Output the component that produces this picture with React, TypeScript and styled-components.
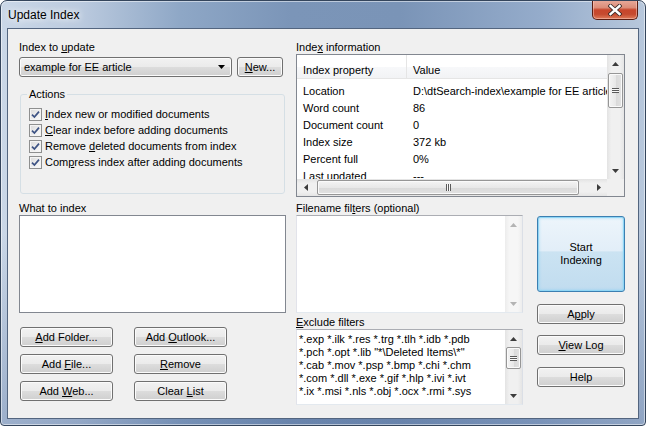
import React from 'react';
import styled, { createGlobalStyle } from 'styled-components';

const GlobalStyle = createGlobalStyle`
  html, body {
    margin: 0;
    padding: 0;
    background: #ffffff;
  }
  body {
    font-family: 'Liberation Sans', Arial, sans-serif;
    font-size: 11px;
    color: #000;
  }
`;

type Dir = 'up' | 'down' | 'left' | 'right';

const Tri: React.FC<{ dir: Dir; color?: string }> = ({ dir, color = '#3c3c3c' }) => {
  const vertical = dir === 'up' || dir === 'down';
  const points = {
    up: '0,4 3.5,0 7,4',
    down: '0,0 7,0 3.5,4',
    left: '4,0 4,7 0,3.5',
    right: '0,0 0,7 4,3.5',
  }[dir];
  return (
    <svg width={vertical ? 7 : 4} height={vertical ? 4 : 7} viewBox={vertical ? '0 0 7 4' : '0 0 4 7'}>
      <polygon points={points} fill={color} />
    </svg>
  );
};

const Window = styled.div`
  width: 646px;
  height: 426px;
  box-sizing: border-box;
  border: 1px solid #34455c;
  border-radius: 7px 7px 4px 4px;
  padding: 0 6px 6px;
  display: flex;
  flex-direction: column;
  background:
    linear-gradient(to bottom, rgba(255, 255, 255, 0) 0%, rgba(255, 255, 255, 0) 55%, rgba(70, 100, 150, 0.35) 100%),
    linear-gradient(to right, #cad7e7 0%, #bccbdf 12%, #8ea7c6 28%, #7b95b8 45%, #7a94b7 62%, #95accb 84%, #b8c8dc 100%);
  box-shadow: inset 0 0 0 1px rgba(255, 255, 255, 0.5);
  overflow: hidden;
`;

const TitleBar = styled.div`
  height: 27px;
  flex: none;
  display: flex;
  justify-content: space-between;
  align-items: flex-start;
  padding-left: 1px;
`;

const Title = styled.div`
  margin-top: 6px;
  font-size: 12px;
  line-height: 16px;
  color: #000;
  text-shadow: 0 0 6px rgba(255, 255, 255, 0.95), 0 0 10px rgba(255, 255, 255, 0.8);
`;

const CloseButton = styled.div`
  width: 46px;
  height: 20px;
  margin: -1px 1px 0 0;
  box-sizing: border-box;
  border: 1px solid #5a1d12;
  border-top: none;
  border-radius: 0 0 5px 5px;
  background: linear-gradient(to bottom, #e9ab9c 0%, #dc8d79 40%, #c8462c 52%, #c54a2f 75%, #df7b5a 100%);
  box-shadow: inset 0 0 0 1px rgba(255, 220, 210, 0.45);
  display: flex;
  align-items: center;
  justify-content: center;
`;

const Client = styled.div`
  flex: 1;
  box-sizing: border-box;
  border: 1px solid #53657f;
  background: #f0f0f0;
  padding: 11px 13px 0 11px;
  display: flex;
  gap: 10px;
`;

const LeftColumn = styled.div`
  width: 267px;
  display: flex;
  flex-direction: column;
`;

const RightColumn = styled.div`
  width: 329px;
  display: flex;
  flex-direction: column;
`;

const FieldLabel = styled.div<{ $mt?: number }>`
  height: 14px;
  line-height: 14px;
  margin-top: ${(p) => p.$mt ?? 0}px;
  white-space: nowrap;
`;

const Mn = styled.span`
  text-decoration: underline;
  text-underline-offset: 1px;
`;

const PushButton = styled.button<{ $w?: number; $h?: number; $mt?: number; $primary?: boolean }>`
  width: ${(p) => (p.$w ? `${p.$w}px` : '100%')};
  height: ${(p) => p.$h ?? 20}px;
  margin: ${(p) => p.$mt ?? 0}px 0 0;
  padding: 0;
  box-sizing: border-box;
  font: inherit;
  font-size: 11px;
  line-height: 13px;
  color: #000;
  border: 1px solid ${(p) => (p.$primary ? '#3c7fb1' : '#707070')};
  border-radius: 3px;
  background: ${(p) =>
    p.$primary
      ? 'linear-gradient(to bottom, #edf5fb 0%, #e2eef8 46%, #cbe3f2 47%, #c1dcef 100%)'
      : 'linear-gradient(to bottom, #f2f2f2 0%, #ebebeb 48%, #dddddd 50%, #cfcfcf 100%)'};
  box-shadow: ${(p) =>
    p.$primary ? 'inset 0 0 0 1px #8fd6f5, inset 0 0 3px 1px rgba(120, 205, 245, 0.6)' : 'inset 0 0 0 1px #fbfbfb'};
  display: flex;
  align-items: center;
  justify-content: center;
  text-align: center;
  flex: none;
`;

const ComboRow = styled.div`
  margin-top: 3px;
  display: flex;
  align-items: center;
  gap: 5px;
`;

const Combo = styled.div`
  width: 213px;
  height: 20px;
  box-sizing: border-box;
  border: 1px solid #707070;
  border-radius: 3px;
  background: linear-gradient(to bottom, #f2f2f2 0%, #ebebeb 48%, #dddddd 50%, #cfcfcf 100%);
  box-shadow: inset 0 0 0 1px #fbfbfb;
  padding: 0 6px 0 4px;
  display: flex;
  align-items: center;
  justify-content: space-between;
`;

const GroupBox = styled.fieldset`
  margin: 11px 1px 0;
  height: 106px;
  box-sizing: border-box;
  border: 1px solid #d5dfe5;
  border-radius: 3px;
  padding: 0 6px;
  min-width: 0;
`;

const GroupLegend = styled.legend`
  padding: 0 2px;
  line-height: 13px;
`;

const CheckList = styled.div`
  margin: 5px 0 0 2px;
  display: flex;
  flex-direction: column;
`;

const CheckRow = styled.div`
  height: 16px;
  display: flex;
  align-items: center;
  gap: 3px;
  white-space: nowrap;
`;

const CheckBox = styled.span`
  width: 13px;
  height: 13px;
  box-sizing: border-box;
  flex: none;
  border: 1px solid #8e8f8f;
  background: linear-gradient(135deg, #d9d9d9 0%, #eeeeee 55%, #fbfbfb 100%);
  box-shadow: inset 0 0 0 1px #f4f4f4;
  display: flex;
  align-items: center;
  justify-content: center;
`;

const ListBox = styled.div<{ $h: number; $light?: boolean }>`
  height: ${(p) => p.$h}px;
  box-sizing: border-box;
  border: 1px solid;
  border-color: ${(p) => (p.$light ? '#abadb3 #dbdfe6 #e3e9ef #e2e3ea' : '#828790')};
  background: #fff;
  display: flex;
  overflow: hidden;
`;

const ButtonGrid = styled.div`
  margin: 14px 0 0 1px;
  display: grid;
  grid-template-columns: 93px 93px;
  column-gap: 21px;
  row-gap: 7px;
`;

const ListView = styled.div`
  height: 143px;
  box-sizing: border-box;
  border: 1px solid #828790;
  background: #fff;
  display: grid;
  grid-template-columns: 1fr 17px;
  grid-template-rows: 1fr 17px;
  overflow: hidden;
`;

const ListContent = styled.div`
  overflow: hidden;
  min-width: 0;
`;

const ListHeader = styled.div`
  height: 24px;
  box-sizing: border-box;
  border-bottom: 1px solid #e5e5e5;
  background: linear-gradient(to bottom, #ffffff 0%, #ffffff 50%, #f7f8fa 51%, #f2f3f5 100%);
  display: grid;
  grid-template-columns: 110px 1fr;
`;

const HeaderCell = styled.div<{ $divider?: boolean }>`
  padding: 8px 0 0 6px;
  line-height: 14px;
  border-right: ${(p) => (p.$divider ? '1px solid #e5e5e5' : 'none')};
  white-space: nowrap;
`;

const ListRows = styled.div`
  padding-top: 4px;
  display: grid;
  grid-template-columns: 110px 200px;
  grid-auto-rows: 17px;
`;

const Cell = styled.div`
  padding-left: 6px;
  line-height: 17px;
  white-space: nowrap;
  overflow: hidden;
`;

const VScroll = styled.div<{ $disabled?: boolean }>`
  width: 17px;
  flex: none;
  display: flex;
  flex-direction: column;
  background: ${(p) =>
    p.$disabled
      ? 'linear-gradient(to right, #ececec 0%, #f6f6f6 25%, #f6f6f6 75%, #ededed 100%)'
      : 'linear-gradient(to right, #e3e3e3 0%, #f0f0f0 25%, #f0f0f0 75%, #e5e5e5 100%)'};
`;

const HScroll = styled.div`
  height: 17px;
  display: flex;
  background: linear-gradient(to bottom, #e3e3e3 0%, #f0f0f0 25%, #f0f0f0 75%, #e5e5e5 100%);
`;

const ScrollCorner = styled.div`
  background: #f0f0f0;
`;

const ScrollBtn = styled.div`
  width: 17px;
  height: 17px;
  flex: none;
  display: flex;
  align-items: center;
  justify-content: center;
`;

const Track = styled.div<{ $horizontal?: boolean }>`
  flex: 1;
  min-width: 0;
  min-height: 0;
  display: flex;
  flex-direction: ${(p) => (p.$horizontal ? 'row' : 'column')};
`;

const ThumbV = styled.div<{ $offset: number; $size: number }>`
  margin: ${(p) => p.$offset}px 1px 0;
  height: ${(p) => p.$size}px;
  box-sizing: border-box;
  border: 1px solid #969696;
  border-radius: 2px;
  background: linear-gradient(to right, #f4f4f4 0%, #e8e8e8 50%, #d9d9d9 51%, #e2e2e2 100%);
  box-shadow: inset 0 0 0 1px #fafafa;
  display: flex;
  align-items: center;
  justify-content: center;
`;

const ThumbH = styled.div<{ $offset: number; $size: number }>`
  margin: 1px 0 1px ${(p) => p.$offset}px;
  width: ${(p) => p.$size}px;
  box-sizing: border-box;
  border: 1px solid #969696;
  border-radius: 2px;
  background: linear-gradient(to bottom, #f4f4f4 0%, #e8e8e8 50%, #d9d9d9 51%, #e2e2e2 100%);
  box-shadow: inset 0 0 0 1px #fafafa;
  display: flex;
  align-items: center;
  justify-content: center;
`;

const GripV = styled.div`
  width: 7px;
  height: 5px;
  background: repeating-linear-gradient(to bottom, #5a5a5a 0 1px, #f8f8f8 1px 2px);
`;

const GripH = styled.div`
  width: 5px;
  height: 7px;
  background: repeating-linear-gradient(to right, #5a5a5a 0 1px, #f8f8f8 1px 2px);
`;

const BottomRow = styled.div`
  margin-top: 4px;
  display: flex;
  gap: 14px;
`;

const FiltersColumn = styled.div`
  width: 227px;
  display: flex;
  flex-direction: column;
`;

const ActionColumn = styled.div`
  width: 88px;
  display: flex;
  flex-direction: column;
`;

const TextArea = styled.div`
  flex: 1;
  min-width: 0;
  padding: 3px 0 0 2px;
  line-height: 13px;
  white-space: nowrap;
  overflow: hidden;
`;

const VScrollBar: React.FC<{ disabled?: boolean; thumb?: { offset: number; size: number } }> = ({
  disabled,
  thumb,
}) => {
  const arrow = disabled ? '#b4b4b4' : '#3c3c3c';
  return (
    <VScroll $disabled={disabled}>
      <ScrollBtn>
        <Tri dir="up" color={arrow} />
      </ScrollBtn>
      <Track>
        {thumb && (
          <ThumbV $offset={thumb.offset} $size={thumb.size}>
            <GripV />
          </ThumbV>
        )}
      </Track>
      <ScrollBtn>
        <Tri dir="down" color={arrow} />
      </ScrollBtn>
    </VScroll>
  );
};

const indexInfo: [string, string][] = [
  ['Location', 'D:\\dtSearch-index\\example for EE article'],
  ['Word count', '86'],
  ['Document count', '0'],
  ['Index size', '372 kb'],
  ['Percent full', '0%'],
  ['Last updated', '---'],
];

const excludeFilters = [
  '*.exp *.ilk *.res *.trg *.tlh *.idb *.pdb',
  '*.pch *.opt *.lib "*\\Deleted Items\\*"',
  '*.cab *.mov *.psp *.bmp *.chi *.chm',
  '*.com *.dll *.exe *.gif *.hlp *.ivi *.ivt',
  '*.ix *.msi *.nls *.obj *.ocx *.rmi *.sys',
];

const Check: React.FC<{ children: React.ReactNode }> = ({ children }) => (
  <CheckRow>
    <CheckBox>
      <svg width="9" height="9" viewBox="0 0 9 9">
        <path d="M1 4.6 L3.4 7 L8 1.6" fill="none" stroke="#3d5384" strokeWidth="1.7" />
      </svg>
    </CheckBox>
    <span>{children}</span>
  </CheckRow>
);

const App: React.FC = () => {
  return (
    <>
      <GlobalStyle />
      <Window>
        <TitleBar>
          <Title>Update Index</Title>
          <CloseButton>
            <svg width="14" height="12" viewBox="0 0 14 12">
              <path d="M2.5 2 L11.5 10 M11.5 2 L2.5 10" stroke="#3a2a28" strokeWidth="4.2" strokeLinecap="square" />
              <path d="M2.5 2 L11.5 10 M11.5 2 L2.5 10" stroke="#ffffff" strokeWidth="2.4" strokeLinecap="square" />
            </svg>
          </CloseButton>
        </TitleBar>
        <Client>
          <LeftColumn>
            <FieldLabel>
              Index to <Mn>u</Mn>pdate
            </FieldLabel>
            <ComboRow>
              <Combo>
                <span>example for EE article</span>
                <Tri dir="down" color="#000" />
              </Combo>
              <PushButton $w={46}>
                <span>
                  <Mn>N</Mn>ew...
                </span>
              </PushButton>
            </ComboRow>
            <GroupBox>
              <GroupLegend>Actions</GroupLegend>
              <CheckList>
                <Check>
                  <Mn>I</Mn>ndex new or modified documents
                </Check>
                <Check>
                  <Mn>C</Mn>lear index before adding documents
                </Check>
                <Check>
                  Remove <Mn>d</Mn>eleted documents from index
                </Check>
                <Check>
                  Com<Mn>p</Mn>ress index after adding documents
                </Check>
              </CheckList>
            </GroupBox>
            <FieldLabel $mt={7}>What to index</FieldLabel>
            <ListBox $h={98} />
            <ButtonGrid>
              <PushButton>
                <span>
                  <Mn>A</Mn>dd Folder...
                </span>
              </PushButton>
              <PushButton>
                <span>
                  Add <Mn>O</Mn>utlook...
                </span>
              </PushButton>
              <PushButton>
                <span>
                  Add <Mn>F</Mn>ile...
                </span>
              </PushButton>
              <PushButton>
                <span>
                  <Mn>R</Mn>emove
                </span>
              </PushButton>
              <PushButton>
                <span>
                  Add <Mn>W</Mn>eb...
                </span>
              </PushButton>
              <PushButton>
                <span>
                  Clear <Mn>L</Mn>ist
                </span>
              </PushButton>
            </ButtonGrid>
          </LeftColumn>

          <RightColumn>
            <FieldLabel>
              Inde<Mn>x</Mn> information
            </FieldLabel>
            <ListView>
              <ListContent>
                <ListHeader>
                  <HeaderCell $divider>Index property</HeaderCell>
                  <HeaderCell>Value</HeaderCell>
                </ListHeader>
                <ListRows>
                  {indexInfo.map(([k, v]) => (
                    <React.Fragment key={k}>
                      <Cell>{k}</Cell>
                      <Cell>{v}</Cell>
                    </React.Fragment>
                  ))}
                </ListRows>
              </ListContent>
              <VScrollBar thumb={{ offset: 1, size: 35 }} />
              <HScroll>
                <ScrollBtn>
                  <Tri dir="left" />
                </ScrollBtn>
                <Track $horizontal>
                  <ThumbH $offset={3} $size={262}>
                    <GripH />
                  </ThumbH>
                </Track>
                <ScrollBtn>
                  <Tri dir="right" />
                </ScrollBtn>
              </HScroll>
              <ScrollCorner />
            </ListView>

            <BottomRow>
              <FiltersColumn>
                <FieldLabel>
                  Filename fil<Mn>t</Mn>ers (optional)
                </FieldLabel>
                <ListBox $h={98} $light>
                  <TextArea />
                  <VScrollBar disabled />
                </ListBox>
                <FieldLabel $mt={2}>
                  <Mn>E</Mn>xclude filters
                </FieldLabel>
                <ListBox $h={76} $light>
                  <TextArea>
                    {excludeFilters.map((line) => (
                      <div key={line}>{line}</div>
                    ))}
                  </TextArea>
                  <VScrollBar thumb={{ offset: 0, size: 22 }} />
                </ListBox>
              </FiltersColumn>
              <ActionColumn>
                <PushButton $h={76} $mt={15} $primary>
                  Start
                  <br />
                  Indexing
                </PushButton>
                <PushButton $mt={12}>
                  <span>
                    A<Mn>p</Mn>ply
                  </span>
                </PushButton>
                <PushButton $mt={11}>
                  <span>
                    <Mn>V</Mn>iew Log
                  </span>
                </PushButton>
                <PushButton $mt={12}>Help</PushButton>
              </ActionColumn>
            </BottomRow>
          </RightColumn>
        </Client>
      </Window>
    </>
  );
};

export default App;
